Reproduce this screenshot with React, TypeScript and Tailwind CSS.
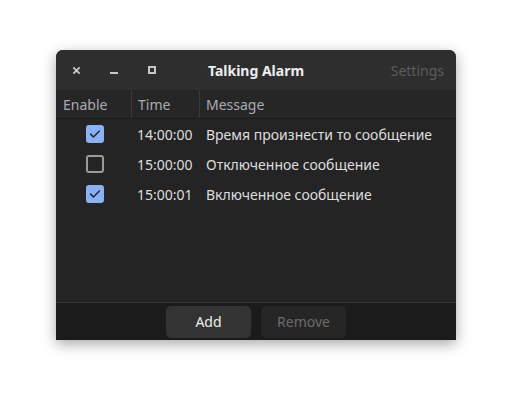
const ROWS = [
  { enabled: true, time: "14:00:00", message: "Время произнести то сообщение" },
  { enabled: false, time: "15:00:00", message: "Отключенное сообщение" },
  { enabled: true, time: "15:00:01", message: "Включенное сообщение" },
];

function CheckBox({ checked }: { checked: boolean }) {
  if (!checked) {
    return <div className="h-[18px] w-[18px] rounded-[3px] border-2 border-[#9a9a9a]" />;
  }
  return (
    <div className="flex h-[18px] w-[18px] items-center justify-center rounded-[3px] bg-[#8cb0f4]">
      <svg viewBox="0 0 16 16" className="h-[14px] w-[14px]" fill="none" aria-hidden="true">
        <path
          d="M3 8.2l3.2 3.2L13 4.6"
          stroke="#1e2a40"
          strokeWidth="1.8"
          strokeLinecap="round"
          strokeLinejoin="round"
        />
      </svg>
    </div>
  );
}

function TitleButtons() {
  return (
    <div className="flex items-center">
      <div className="flex w-[40px] justify-center">
        <svg viewBox="0 0 10 10" className="h-[9px] w-[9px]" aria-hidden="true">
          <path d="M1.5 1.5l7 7M8.5 1.5l-7 7" stroke="#c8c8c8" strokeWidth="2" />
        </svg>
      </div>
      <div className="flex w-[36px] justify-center pt-[6px]">
        <div className="h-[2px] w-[8px] bg-[#c8c8c8]" />
      </div>
      <div className="flex w-[40px] justify-center">
        <div className="h-[8px] w-[8px] border-2 border-[#c8c8c8]" />
      </div>
    </div>
  );
}

export default function App() {
  return (
    <div
      className="h-[402px] w-[512px] bg-white pl-[56px] pt-[50px] text-[14px]"
      style={{ fontFamily: '"Noto Sans", sans-serif' }}
    >
      <div className="flex h-[290px] w-[400px] flex-col overflow-hidden rounded-t-[7px] bg-[#242424] shadow-[0_4px_14px_rgba(0,0,0,0.35)]">
        {/* header bar */}
        <div className="grid h-[40px] grid-cols-[1fr_auto_1fr] items-center bg-[#2e2e2e]">
          <TitleButtons />
          <span className="font-bold text-[#eeeeee]">Talking Alarm</span>
          <span className="justify-self-end pr-[12px] text-[#5c5c5c]">Settings</span>
        </div>

        {/* column headers */}
        <div className="flex h-[29px] items-stretch border-b border-[#1b1b1b] bg-[#262626] text-[#a9acb2]">
          <div className="flex w-[76px] items-center border-r border-[#3a3a3a] pl-[7px]">Enable</div>
          <div className="flex w-[68px] items-center border-r border-[#3a3a3a] pl-[6px]">Time</div>
          <div className="flex flex-1 items-center pl-[6px]">Message</div>
        </div>

        {/* rows */}
        <div className="flex-1 border-b border-[#333333] bg-[#242424] text-[#dedede]">
          {ROWS.map((row) => (
            <div key={row.time} className="flex h-[30px] items-center">
              <div className="flex w-[78px] justify-center">
                <CheckBox checked={row.enabled} />
              </div>
              <div className="w-[72px] pl-[3px]">{row.time}</div>
              <div className="flex-1">{row.message}</div>
            </div>
          ))}
        </div>

        {/* action bar */}
        <div className="flex h-[37px] items-center justify-center gap-[10px] bg-[#1b1b1b]">
          <button className="h-[32px] w-[85px] rounded-[5px] bg-[#333333] text-[#eeeeee]">Add</button>
          <button className="h-[32px] w-[85px] rounded-[5px] bg-[#262626] text-[#6b6b6b]">Remove</button>
        </div>
      </div>
    </div>
  );
}
